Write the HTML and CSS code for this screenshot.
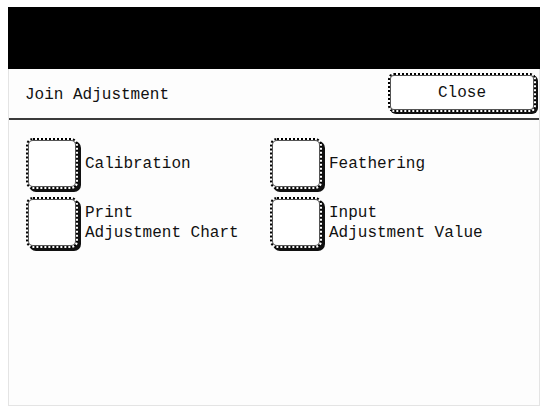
FILE: index.html
```html
<!DOCTYPE html>
<html>
<head>
<meta charset="utf-8">
<link rel="stylesheet" href="styles.css">
</head>
<body>
<div class="frame">
  <div class="topbar"></div>
  <div class="titlebar">
    <span class="title">Join Adjustment</span>
    <button class="close-btn">Close</button>
  </div>
  <div class="content">
    <div class="item">
      <span class="box"></span>
      <span class="label">Calibration</span>
    </div>
    <div class="item">
      <span class="box"></span>
      <span class="label">Feathering</span>
    </div>
    <div class="item">
      <span class="box"></span>
      <span class="label">Print<br>Adjustment Chart</span>
    </div>
    <div class="item">
      <span class="box"></span>
      <span class="label">Input<br>Adjustment Value</span>
    </div>
  </div>
</div>
</body>
</html>
```

FILE: styles.css
```css
* { box-sizing: border-box; }

html, body {
  margin: 0;
  padding: 0;
  background: #ffffff;
}

body {
  font-family: "Liberation Mono", "DejaVu Sans Mono", monospace;
  font-size: 16px;
  color: #111;
}

.frame {
  margin: 7px 0 0 8px;
  width: 532px;
  height: 399px;
  border: 1px solid #e4e4e4;
  border-top: none;
  background: #fdfdfd;
  display: flex;
  flex-direction: column;
}

.topbar {
  height: 62px;
  background: #000;
  margin: 0 -1px;
}

.titlebar {
  height: 51px;
  display: flex;
  align-items: center;
  justify-content: space-between;
  padding-left: 16px;
  padding-right: 3px;
  border-bottom: 2px solid #3a3a3a;
}

.title {
  line-height: 20px;
  padding-top: 2px;
}

.close-btn {
  width: 148px;
  height: 39px;
  margin-top: -2px;
  font-family: inherit;
  font-size: 16px;
  color: #111;
  background: #fff;
  border: 2px dotted #000;
  border-radius: 6px;
  box-shadow: inset 0 0 0 1px #555, 2px 2px 0 #111;
  padding: 0;
}

.content {
  display: grid;
  grid-template-columns: 244px 1fr;
  row-gap: 8px;
  padding: 18px 0 0 17px;
}

.item {
  display: flex;
  align-items: center;
  gap: 7px;
}

.box {
  width: 52px;
  height: 51px;
  flex: none;
  background: #fff;
  border: 2px dotted #000;
  border-radius: 7px;
  box-shadow: inset 0 0 0 1px #555, 3px 3px 0 #111;
}

.label {
  line-height: 20px;
  white-space: nowrap;
}
```
